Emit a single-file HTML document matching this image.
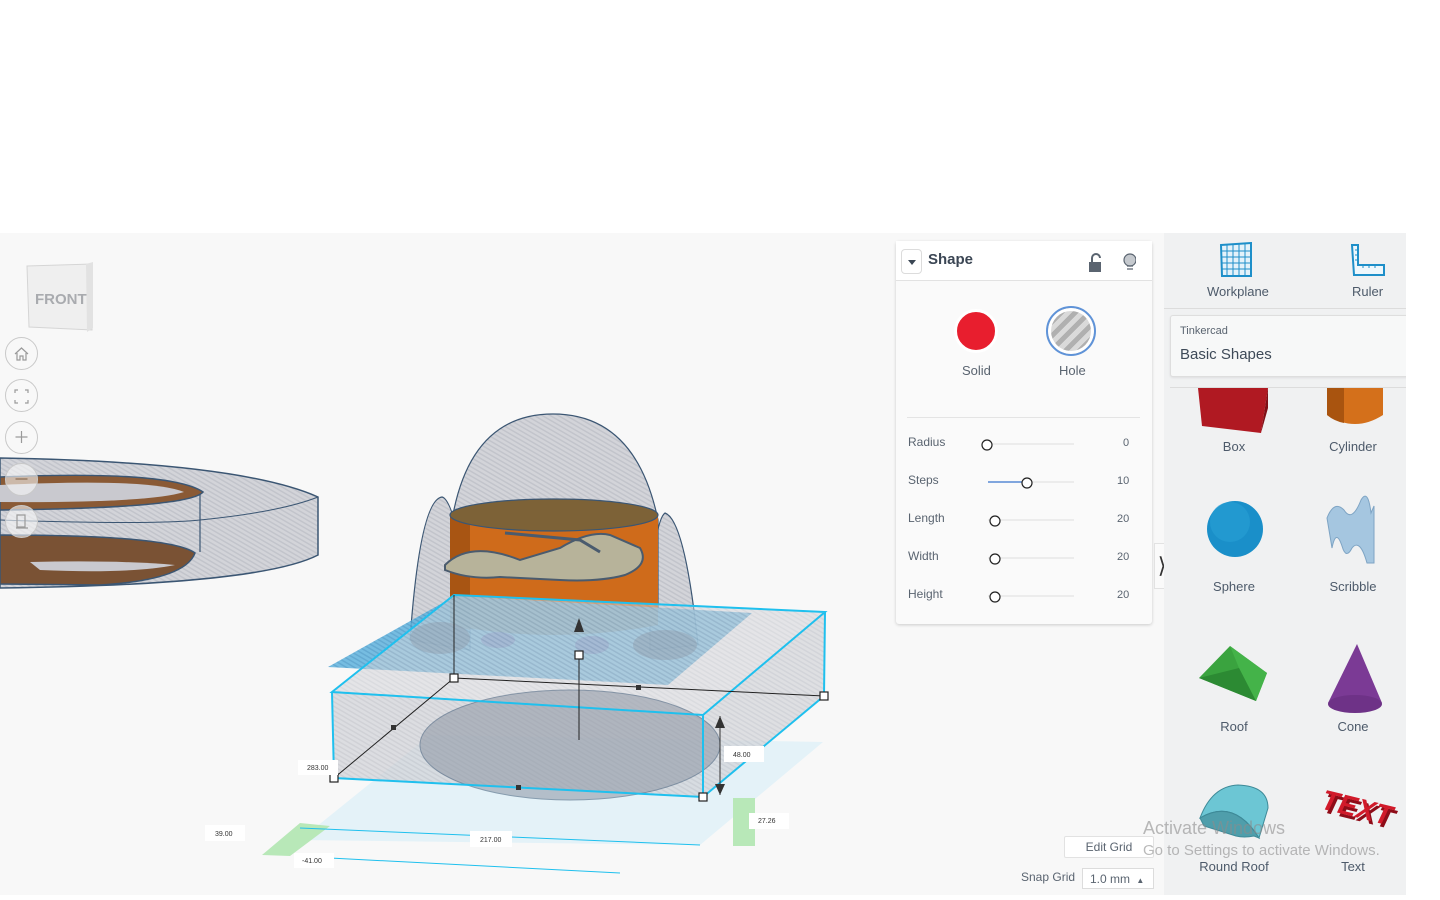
<!DOCTYPE html>
<html><head><meta charset="utf-8">
<style>
*{box-sizing:border-box;margin:0;padding:0}
body{width:1440px;height:900px;background:#fff;font-family:"Liberation Sans",sans-serif;position:relative;overflow:hidden;color:#4a5360}
.vp{position:absolute;left:0;top:233px;width:1164px;height:662px;background:#f8f8f8}
.side{position:absolute;left:1164px;top:233px;width:242px;height:662px;background:#f0f1f2;overflow:hidden}
.panel{position:absolute;left:896px;top:241px;width:256px;height:383px;background:#fafafa;border-radius:3px;box-shadow:0 1px 3px rgba(0,0,0,.18)}
.abs{position:absolute}
.lbl{font-size:13px;color:#5a6470}
.sl{position:absolute;font-size:12px;color:#5a6470}
.navb{position:absolute;left:5px;width:33px;height:33px;border-radius:50%;border:1px solid #c9c9c9;background:rgba(248,248,248,.6)}
.shapeLbl{position:absolute;font-size:13px;color:#4d5a6a;text-align:center;width:100px}
</style></head><body>
<div class="vp"></div>
<svg class="abs" style="left:0;top:0" width="1164" height="900" viewBox="0 0 1164 900">
<defs>
<pattern id="h" width="4" height="4" patternUnits="userSpaceOnUse" patternTransform="rotate(30)"><rect width="4" height="4" fill="#d3d4d9"/><rect width="4" height="1.5" fill="#c2c4cb"/></pattern>
<pattern id="hb" width="4" height="4" patternUnits="userSpaceOnUse" patternTransform="rotate(30)"><rect width="4" height="4" fill="#5fb2dd"/><rect width="4" height="1.5" fill="#4a9ccb"/></pattern>
</defs>
<path d="M0 458 Q240 462 318 497 L318 555 Q260 585 0 588 Z" fill="url(#h)" stroke="#3b5673" stroke-width="1.5"/>
<path d="M0 520 Q150 525 200 520 Q280 512 318 497" fill="none" stroke="#3b5673" stroke-width="1"/>
<path d="M200 492 L200 552" stroke="#3b5673" stroke-width="1.2"/>
<path d="M0 477 Q170 470 203 492 Q190 508 0 510 Z" fill="#8a5a35" stroke="#3b5673" stroke-width="1.5"/>
<path d="M0 485 Q150 478 184 492 Q150 503 0 502 Z" fill="#c9c9cf"/>
<path d="M0 535 Q170 535 195 553 Q185 580 100 585 L0 584 Z" fill="#7a5234" stroke="#3b5673" stroke-width="1.5"/>
<path d="M30 562 Q120 560 175 565 Q130 574 40 570 Z" fill="#c9c9cf"/>
<path d="M410 640 Q420 500 442 497 Q455 500 470 600 L470 650 Z" fill="url(#h)" stroke="#3b5673" stroke-width="1.2"/>
<path d="M650 600 Q655 520 665 513 Q685 520 698 645 L650 650 Z" fill="url(#h)" stroke="#3b5673" stroke-width="1.2"/>
<path d="M452 520 Q470 414 553 414 Q636 414 658 520 L658 610 L452 610 Z" fill="url(#h)" stroke="#3b5673" stroke-width="1.2"/>
<path d="M450 515 L450 625 Q555 645 658 625 L658 515 Z" fill="#cf6b1b"/>
<path d="M450 515 L450 625 Q460 628 470 630 L470 520 Z" fill="#a85513"/>
<ellipse cx="554" cy="515" rx="104" ry="16" fill="#7d6237" stroke="#3b5673" stroke-width="1.2"/>
<path d="M445 565 Q470 540 520 560 L560 548 Q590 530 610 535 L640 548 Q650 565 625 575 Q600 582 560 580 L500 577 Q470 580 445 570 Z" fill="#b7b39a" stroke="#4a5b6e" stroke-width="2"/>
<path d="M505 533 L580 540 L600 552" fill="none" stroke="#4a5b6e" stroke-width="3"/>
<ellipse cx="498" cy="640" rx="17" ry="8" fill="#b3177a"/>
<ellipse cx="592" cy="645" rx="17" ry="9" fill="#b3177a"/>
<path d="M328 667 L455 596 L752 613 L668 685 Z" fill="url(#hb)" opacity=".85"/>
<ellipse cx="440" cy="638" rx="30" ry="16" fill="#4d6f8c" opacity=".55"/>
<ellipse cx="665" cy="645" rx="32" ry="15" fill="#4d6f8c" opacity=".55"/>
<path d="M300 840 L430 735 L823 742 L700 845 Z" fill="#dff0f8" opacity=".8"/>
<path d="M262 855 L300 823 L330 826 L290 856 Z" fill="#b8e8b8"/>
<rect x="733" y="798" width="22" height="48" fill="#b8e8b8"/>
<path d="M332 692 L454 595 L825 612 L703 715 Z" fill="url(#h)" opacity=".55"/>
<path d="M332 692 L703 715 L703 797 L334 778 Z" fill="url(#h)" opacity=".75"/>
<path d="M703 715 L825 612 L824 696 L703 797 Z" fill="url(#h)" opacity=".7"/>
<ellipse cx="570" cy="745" rx="150" ry="55" fill="#8c95a3" opacity=".55" stroke="#3b5673" stroke-width="1"/>
<path d="M332 692 L454 595 L825 612 L703 715 Z M332 692 L334 778 L703 797 L824 696 L825 612 M703 715 L703 797" fill="none" stroke="#1fc0ee" stroke-width="2"/>
<path d="M454 595 L454 678 L824 696 M454 678 L334 778 M579 655 L579 740" fill="none" stroke="#222" stroke-width="1"/>
<g fill="#fff" stroke="#222" stroke-width="1.2">
<rect x="450" y="674" width="8" height="8"/><rect x="575" y="651" width="8" height="8"/><rect x="820" y="692" width="8" height="8"/><rect x="699" y="793" width="8" height="8"/><rect x="330" y="774" width="8" height="8"/></g>
<g fill="#333"><rect x="636" y="685" width="5" height="5"/><rect x="391" y="725" width="5" height="5"/><rect x="516" y="785" width="5" height="5"/></g>
<path d="M579 618 L574 632 L584 632 Z M720 716 L715 728 L725 728 Z M720 795 L715 784 L725 784 Z" fill="#333"/>
<path d="M720 716 L720 795" stroke="#333"/>
<path d="M300 828 L700 845 M330 858 L620 873" stroke="#1fc0ee" stroke-width="1"/>
<g font-size="7" fill="#333" font-family="Liberation Sans,sans-serif">
<rect x="298" y="760" width="40" height="15" fill="#fff"/><text x="307" y="770">283.00</text>
<rect x="724" y="746" width="40" height="16" fill="#fff"/><text x="733" y="757">48.00</text>
<rect x="749" y="813" width="40" height="16" fill="#fff"/><text x="758" y="823">27.26</text>
<rect x="470" y="831" width="42" height="16" fill="#fff"/><text x="480" y="842">217.00</text>
<rect x="205" y="825" width="40" height="16" fill="#fff"/><text x="215" y="836">39.00</text>
<rect x="294" y="853" width="40" height="15" fill="#fff"/><text x="302" y="863">-41.00</text>
</g>
<path d="M27 266 L92 264 L92 330 L29 327 Z" fill="#efefef" stroke="#d5d5d5"/>
<path d="M86 264 L93 262 L93 328 L87 332 Z" fill="#e2e2e2"/>
<text x="35" y="304" font-size="15" font-weight="bold" fill="#a9abaf" font-family="Liberation Sans,sans-serif">FRONT</text>
</svg>
<div class="navb" style="top:337px"></div>
<div class="navb" style="top:379px"></div>
<div class="navb" style="top:421px"></div>
<div class="navb" style="top:463px"></div>
<div class="navb" style="top:505px"></div>
<svg class="abs" style="left:5px;top:337px" width="33" height="200" fill="none" stroke="#9a9a9a" stroke-width="1.2">
<path d="M10 17 L16.5 11 L23 17 M12 16 V23 H15 V19 H18 V23 H21 V16"/>
<path d="M10 56 V53 H13 M20 53 H23 V56 M23 63 V66 H20 M13 66 H10 V63"/>
<path d="M16.5 94 V106 M10.5 100 H22.5"/>
<path d="M10.5 142 H22.5" stroke="#8a6a50"/>
<path d="M12 178 H20 V190 H12 Z M11 191 H23"/>
</svg>

<div class="panel">
 <div class="abs" style="left:0;top:0;width:256px;height:40px;background:#fff;border-bottom:1px solid #e2e2e2"></div>
 <div class="abs" style="left:5px;top:8px;width:21px;height:25px;border:1px solid #dcdcdc;border-radius:4px;background:#fff"></div>
 <div class="abs" style="left:12px;top:19px;border-left:4px solid transparent;border-right:4px solid transparent;border-top:5px solid #3b4654"></div>
 <div class="abs" style="left:32px;top:10px;font-size:15px;font-weight:bold;color:#3b4654">Shape</div>
 <svg class="abs" style="left:190px;top:11px" width="50" height="22"><path d="M3 10 H15 V20 H3 Z" fill="#5a6470"/><path d="M6 10 V6 A4 4 0 0 1 14 6" fill="none" stroke="#5a6470" stroke-width="2"/><circle cx="44" cy="8" r="6" fill="#c5c9ce" stroke="#5a6470" stroke-width="1.2"/><path d="M41 14 H47 M41 17 H47" stroke="#5a6470" stroke-width="1.3"/></svg>
 <div class="abs" style="left:58px;top:68px;width:44px;height:44px;border-radius:50%;background:#e81e2e;border:3px solid #fff"></div>
 <div class="abs" style="left:150px;top:65px;width:50px;height:50px;border-radius:50%;border:2px solid #5f93d8;background:repeating-linear-gradient(135deg,#b0b0b0 0 5px,#dadada 5px 10px);box-shadow:inset 0 0 0 3px #fff"></div>
 <div class="abs lbl" style="left:66px;top:122px">Solid</div>
 <div class="abs lbl" style="left:163px;top:122px">Hole</div>
 <div class="abs" style="left:11px;top:176px;width:233px;height:1px;background:#e4e4e4"></div>
 <div class="sl" style="left:12px;top:194px">Radius</div><div class="sl" style="left:12px;top:232px">Steps</div><div class="sl" style="left:12px;top:270px">Length</div><div class="sl" style="left:12px;top:308px">Width</div><div class="sl" style="left:12px;top:346px">Height</div>
 <div class="sl" style="left:227px;top:196px;font-size:11px">0</div><div class="sl" style="left:221px;top:234px;font-size:11px">10</div><div class="sl" style="left:221px;top:272px;font-size:11px">20</div><div class="sl" style="left:221px;top:310px;font-size:11px">20</div><div class="sl" style="left:221px;top:348px;font-size:11px">20</div>
 <svg class="abs" style="left:80px;top:190px" width="110" height="180"><g stroke="#e8e8e8" stroke-width="1.5"><path d="M10 13 H98 M12 51 H98 M12 89 H98 M12 127 H98 M12 165 H98"/></g><path d="M12 51 H51" stroke="#5b8ed8" stroke-width="1.5"/><g fill="#fff" stroke="#222" stroke-width="1.2"><circle cx="11" cy="14" r="5"/><circle cx="51" cy="52" r="5"/><circle cx="19" cy="90" r="5"/><circle cx="19" cy="128" r="5"/><circle cx="19" cy="166" r="5"/></g></svg>
</div>
<div class="abs" style="left:1154px;top:543px;width:16px;height:46px;background:#fafafa;border:1px solid #e2e2e2;font-size:22px;color:#333;text-align:center;line-height:44px">&#x27E9;</div>

<div class="side">
 <svg class="abs" style="left:55px;top:9px" width="34" height="36"><path d="M2 3 L32 1 L32 34 L3 34 Z" fill="#e4f2fa" stroke="#1e8fc9" stroke-width="2"/><g stroke="#1e8fc9" stroke-width="1"><path d="M8 3 V34 M14 2 V34 M20 2 V34 M26 2 V34 M3 9 H32 M3 15 H32 M3 21 H32 M3 27 H32"/></g></svg>
 <svg class="abs" style="left:186px;top:10px" width="36" height="36"><path d="M2 2 H8 V22 H34 V32 H4 Z" fill="#eef7fc" stroke="#1e8fc9" stroke-width="2"/><g stroke="#1e8fc9"><path d="M8 7 H5 M8 12 H5 M8 17 H5 M13 22 V25 M19 22 V25 M25 22 V25"/></g></svg>
 <div class="abs" style="left:43px;top:51px;font-size:13px;color:#4d5a6a">Workplane</div>
 <div class="abs" style="left:188px;top:51px;font-size:13px;color:#4d5a6a">Ruler</div>
 <div class="abs" style="left:0;top:75px;width:242px;height:1px;background:#dcdcdc"></div>
 <div class="abs" style="left:6px;top:82px;width:240px;height:62px;background:#f7f8f8;border:1px solid #dedede;border-radius:3px;box-shadow:0 1px 2px rgba(0,0,0,.08)"></div>
 <div class="abs" style="left:16px;top:92px;font-size:11px;color:#5a6470">Tinkercad</div>
 <div class="abs" style="left:16px;top:113px;font-size:15px;color:#3e4a58">Basic Shapes</div>
 <div class="abs" style="left:6px;top:154px;width:236px;height:1px;background:#dcdcdc"></div>
 <svg class="abs" style="left:0;top:155px" width="242" height="500">
  <path d="M34 0 H104 L97 45 L38 38 Z" fill="#b01922"/><path d="M97 45 L104 0 V20 Z" fill="#7f0f16"/>
  <path d="M163 0 H219 V27 Q191 45 163 27 Z" fill="#d4701b"/><path d="M163 0 H180 V35 Q170 33 163 27 Z" fill="#a9540f"/>
  <circle cx="71" cy="141" r="28" fill="#1a8fc9"/><circle cx="66" cy="134" r="20" fill="#28a0d6" opacity=".6"/>
  <path d="M163 130 Q170 112 180 122 Q188 135 197 112 Q204 100 207 125 L210 118 V175 L203 175 Q196 150 188 160 Q182 172 178 158 Q172 140 168 160 Z" fill="#a5c6e0" stroke="#7ea4c4"/>
  <path d="M35 290 L66 258 L103 285 L92 313 Z" fill="#3aa33f"/><path d="M66 258 L103 285 L92 313 L75 280 Z" fill="#44b349"/><path d="M35 290 L75 280 L92 313 Z" fill="#2c8a33"/>
  <path d="M193 256 L164 315 Q191 330 218 315 Z" fill="#7b3a95"/><ellipse cx="191" cy="316" rx="27" ry="9" fill="#6e3287"/>
  <path d="M36 430 Q48 398 74 397 Q104 398 104 420 L95 450 Q70 410 36 430 Z" fill="#6cc6d4" stroke="#3e8a98"/>
  <path d="M36 430 Q70 410 95 450 L90 448 Q80 450 72 448 L40 438 Z" fill="#4f9eab" stroke="#3e8a98"/>
  <text x="160" y="432" font-size="28" font-weight="bold" font-style="italic" fill="#8e0c18" font-family="Liberation Sans,sans-serif" transform="rotate(14 192 420)">TEXT</text>
  <text x="157" y="429" font-size="28" font-weight="bold" font-style="italic" fill="#d11a2a" font-family="Liberation Sans,sans-serif" transform="rotate(14 192 420)">TEXT</text>
 </svg>
 <div class="shapeLbl" style="left:20px;top:206px">Box</div>
 <div class="shapeLbl" style="left:139px;top:206px">Cylinder</div>
 <div class="shapeLbl" style="left:20px;top:346px">Sphere</div>
 <div class="shapeLbl" style="left:139px;top:346px">Scribble</div>
 <div class="shapeLbl" style="left:20px;top:486px">Roof</div>
 <div class="shapeLbl" style="left:139px;top:486px">Cone</div>
 <div class="shapeLbl" style="left:20px;top:626px">Round Roof</div>
 <div class="shapeLbl" style="left:139px;top:626px">Text</div>
</div>
<div class="abs" style="left:1064px;top:836px;width:90px;height:22px;border:1px solid #e2e2e2;background:#fff;border-radius:2px;font-size:12px;color:#5a6470;text-align:center;line-height:20px">Edit Grid</div>
<div class="abs" style="left:1021px;top:870px;font-size:12px;color:#5a6470">Snap Grid</div>
<div class="abs" style="left:1082px;top:868px;width:72px;height:21px;border:1px solid #dcdcdc;background:#fff;font-size:12px;color:#5a6470;padding-left:7px;line-height:20px">1.0 mm <span style="font-size:8px;margin-left:3px">&#9650;</span></div>
<div class="abs" style="left:1143px;top:818px;font-size:18px;color:rgba(140,140,140,.6)">Activate Windows</div>
<div class="abs" style="left:1143px;top:842px;font-size:15px;color:rgba(140,140,140,.6)">Go to Settings to activate Windows.</div>
</body></html>
